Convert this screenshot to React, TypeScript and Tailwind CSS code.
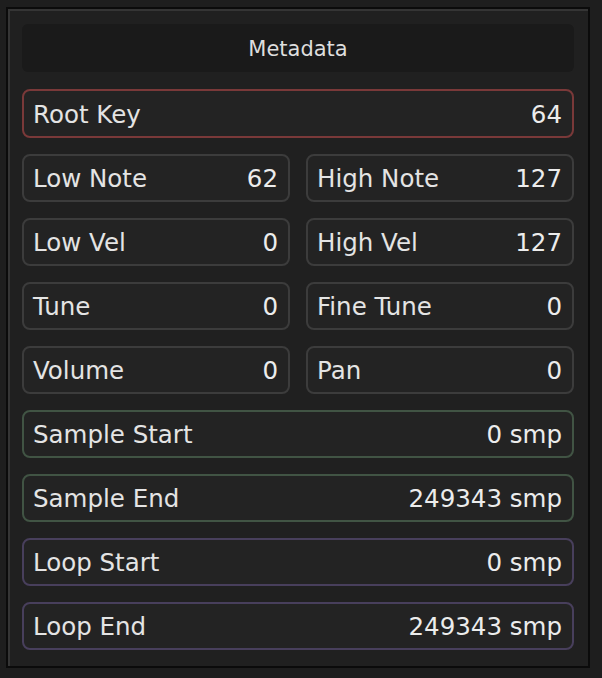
const FONT = "font-['DejaVu_Sans',_'Liberation_Sans',_sans-serif]";

type Field = { label: string; value: string };

const PAIRS: [Field, Field][] = [
    [{ label: 'Low Note', value: '62' }, { label: 'High Note', value: '127' }],
    [{ label: 'Low Vel', value: '0' }, { label: 'High Vel', value: '127' }],
    [{ label: 'Tune', value: '0' }, { label: 'Fine Tune', value: '0' }],
    [{ label: 'Volume', value: '0' }, { label: 'Pan', value: '0' }],
];

const SAMPLE: Field[] = [
    { label: 'Sample Start', value: '0 smp' },
    { label: 'Sample End', value: '249343 smp' },
];

const LOOP: Field[] = [
    { label: 'Loop Start', value: '0 smp' },
    { label: 'Loop End', value: '249343 smp' },
];

function Row({ field, border, tall }: { field: Field; border: string; tall?: boolean }) {
    return (
        <div
            className={`flex items-center justify-between rounded-lg border-2 bg-[#232323] pl-[9px] pr-[10px] pt-[3px] ${border} ${tall ? 'h-[49px]' : 'h-12'}`}
        >
            <span className="text-[24.5px] leading-none text-[#e4e4e4]">{field.label}</span>
            <span className="text-[24.5px] leading-none text-[#ececec]">{field.value}</span>
        </div>
    );
}

export default function App() {
    return (
        <div className={`min-h-[678px] w-[602px] bg-[#1e1e1e] pl-[6px] pt-[7px] ${FONT}`}>
            <div className="h-[661px] w-[584px] border-2 border-[#0b0b0b] bg-[#202020]">
                <div className="flex h-full flex-col border-l-2 border-t-2 border-[#353535] pl-3 pr-[14px] pt-[13px]">
                    {/* Header */}
                    <div className="mb-[17px] flex h-12 items-center justify-center rounded-md bg-[#1a1a1a] pt-[3px]">
                        <span className="text-[21px] leading-none text-[#dedede]">Metadata</span>
                    </div>

                    <div className="flex flex-col gap-4">
                        <Row field={{ label: 'Root Key', value: '64' }} border="border-[#7a3939]" tall />

                        {PAIRS.map(([a, b]) => (
                            <div key={a.label} className="grid grid-cols-2 gap-4">
                                <Row field={a} border="border-[#3c3c3c]" />
                                <Row field={b} border="border-[#3c3c3c]" />
                            </div>
                        ))}

                        {SAMPLE.map((f) => (
                            <Row key={f.label} field={f} border="border-[#415444]" />
                        ))}

                        {LOOP.map((f) => (
                            <Row key={f.label} field={f} border="border-[#483f5c]" />
                        ))}
                    </div>
                </div>
            </div>
        </div>
    );
}
